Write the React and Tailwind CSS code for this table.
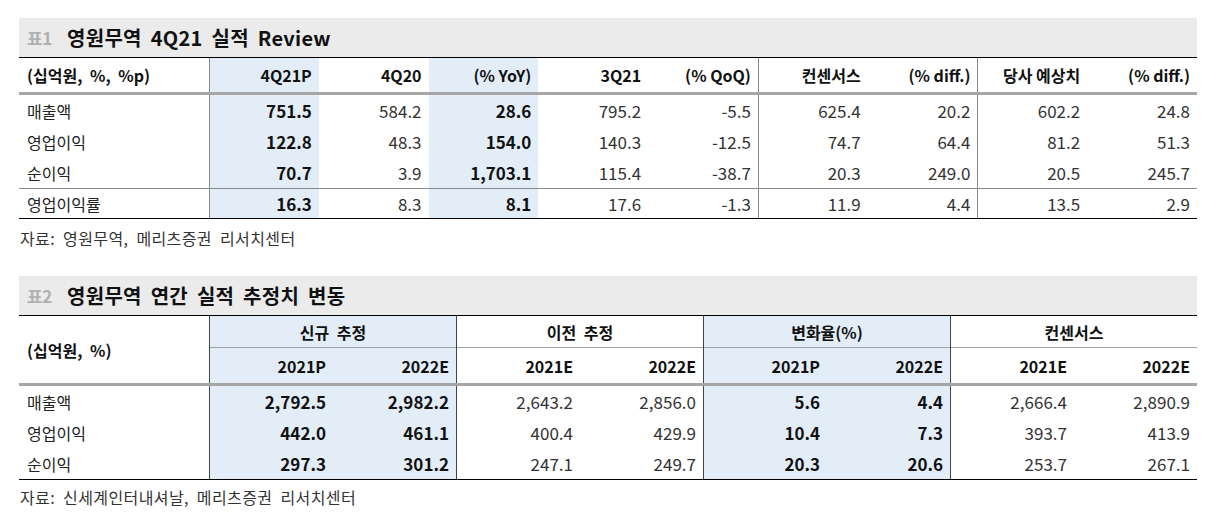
import React from 'react';

const F = { fontFamily: '"Noto Sans CJK KR", "Noto Sans", sans-serif' };

const t1Head = ['(십억원, %, %p)', '4Q21P', '4Q20', '(% YoY)', '3Q21', '(% QoQ)', '컨센서스', '(% diff.)', '당사 예상치', '(% diff.)'];
const t1Rows = [
  ['매출액', '751.5', '584.2', '28.6', '795.2', '-5.5', '625.4', '20.2', '602.2', '24.8'],
  ['영업이익', '122.8', '48.3', '154.0', '140.3', '-12.5', '74.7', '64.4', '81.2', '51.3'],
  ['순이익', '70.7', '3.9', '1,703.1', '115.4', '-38.7', '20.3', '249.0', '20.5', '245.7'],
  ['영업이익률', '16.3', '8.3', '8.1', '17.6', '-1.3', '11.9', '4.4', '13.5', '2.9'],
];

const t2Groups = ['신규 추정', '이전 추정', '변화율(%)', '컨센서스'];
const t2Sub = [['2021P', '2022E'], ['2021E', '2022E'], ['2021P', '2022E'], ['2021E', '2022E']];
const t2Rows = [
  ['매출액', '2,792.5', '2,982.2', '2,643.2', '2,856.0', '5.6', '4.4', '2,666.4', '2,890.9'],
  ['영업이익', '442.0', '461.1', '400.4', '429.9', '10.4', '7.3', '393.7', '413.9'],
  ['순이익', '297.3', '301.2', '247.1', '249.7', '20.3', '20.6', '253.7', '267.1'],
];

function Title({ no, text }) {
  return (
    <div className="flex items-center bg-[#ebebeb] h-[39px] pl-[8px]">
      <span className="text-[17px] font-bold text-[#b0b0b0] w-[40px] tracking-tight">{no}</span>
      <span className="text-[20px] font-bold text-[#111] tracking-[0.3px] [word-spacing:4px]">{text}</span>
    </div>
  );
}

function cell1(i) {
  const blue = i === 1 || i === 3;
  const bl = i === 1 || i === 6 || i === 8;
  return [
    blue ? 'bg-[#e3edf8]' : '',
    bl ? 'border-l border-[#8a8a8a]' : '',
    i === 0 ? 'pl-[8px] text-left' : 'pr-[7px] text-right',
  ].join(' ');
}

export default function App() {
  return (
    <div className="bg-white w-[1211px] h-[513px] pt-[18px] pl-[19px] text-[#222]" style={F}>
      <div className="w-[1178px]">
        <Title no="표1" text="영원무역 4Q21 실적 Review" />
        {/* Table 1 */}
        <div className="border-t border-black border-b">
          <div className="grid grid-cols-[190px_repeat(9,minmax(0,1fr))] h-[37px] border-b-[3px] border-[#a6a6a6]">
            {t1Head.map((h, i) => (
              <div key={i} className={`flex items-center ${i === 0 ? 'justify-start [word-spacing:4px]' : 'justify-end'} text-[16px] font-bold text-[#111] ${cell1(i)}`}>
                {h}
              </div>
            ))}
          </div>
          {t1Rows.map((r, ri) => (
            <div key={ri} className={`grid grid-cols-[190px_repeat(9,minmax(0,1fr))] ${ri === 3 ? 'h-[30px] border-t border-[#8a8a8a]' : 'h-[31px]'}`}>
              {r.map((v, i) => {
                const bold = i === 1 || i === 3;
                return (
                  <div key={i} className={`flex items-center ${i === 0 ? 'justify-start text-[16px] text-[#222]' : 'justify-end text-[17px]'} ${bold ? 'font-bold text-[#111]' : i === 0 ? '' : 'text-[#333]'} ${cell1(i)}`}>
                    {v}
                  </div>
                );
              })}
            </div>
          ))}
        </div>
        <div className="h-[38px] flex items-center pl-[1px] text-[16px] text-[#333] tracking-[0.4px] [word-spacing:4px]">자료: 영원무역, 메리츠증권 리서치센터</div>

        <div className="h-[19px]" />
        <Title no="표2" text="영원무역 연간 실적 추정치 변동" />
        {/* Table 2 */}
        <div className="border-t border-black border-b">
          <div className="flex h-[70px] border-b-[3px] border-[#a6a6a6]">
            <div className="w-[190px] shrink-0 flex items-center pl-[8px] text-[16px] font-bold text-[#111] [word-spacing:4px]">(십억원, %)</div>
            {t2Groups.map((g, gi) => {
              const blue = gi === 0 || gi === 2;
              return (
                <div key={gi} className={`flex-1 min-w-0 flex flex-col border-l border-[#444] ${blue ? 'bg-[#e3edf8]' : ''}`}>
                  <div className="h-[32px] flex items-center justify-center border-b border-[#a0a0a0] text-[16px] font-bold text-[#111] [word-spacing:4px]">{g}</div>
                  <div className="flex-1 grid grid-cols-2">
                    {t2Sub[gi].map((s, si) => (
                      <div key={si} className="flex items-center justify-end pr-[7px] text-[16px] font-bold text-[#111]">{s}</div>
                    ))}
                  </div>
                </div>
              );
            })}
          </div>
          {t2Rows.map((r, ri) => (
            <div key={ri} className="flex h-[31px]">
              <div className="w-[190px] shrink-0 flex items-center pl-[8px] text-[16px] text-[#222]">{r[0]}</div>
              {[0, 1, 2, 3].map((gi) => {
                const blue = gi === 0 || gi === 2;
                return (
                  <div key={gi} className={`flex-1 min-w-0 grid grid-cols-2 border-l border-[#444] ${blue ? 'bg-[#e3edf8]' : ''}`}>
                    {[0, 1].map((si) => (
                      <div key={si} className={`flex items-center justify-end pr-[7px] text-[17px] ${blue ? 'font-bold text-[#111]' : 'text-[#333]'}`}>
                        {r[1 + gi * 2 + si]}
                      </div>
                    ))}
                  </div>
                );
              })}
            </div>
          ))}
        </div>
        <div className="h-[34px] flex items-center pl-[1px] text-[16px] text-[#333] tracking-[0.4px] [word-spacing:4px]">자료: 신세계인터내셔날, 메리츠증권 리서치센터</div>
      </div>
    </div>
  );
}
